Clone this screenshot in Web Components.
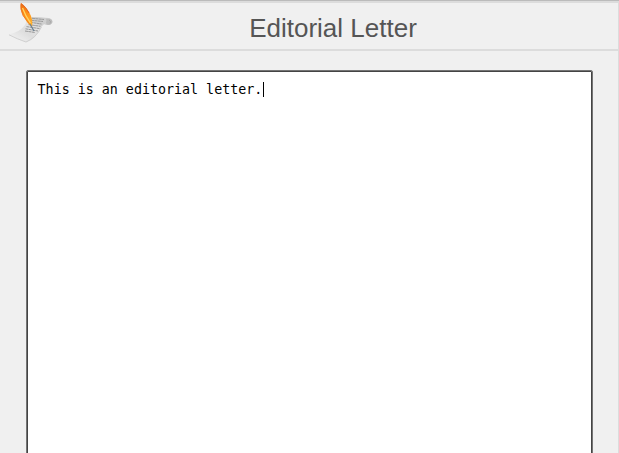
<!DOCTYPE html>
<html lang="en">
<head>
<meta charset="utf-8">
<title>Editorial Letter</title>
<style>
html, body { margin: 0; height: 100%; overflow: hidden; background: #f0f0f0; }
</style>
</head>
<body>
<letter-dialog>
  <dialog-header slot="header">Editorial Letter</dialog-header>
  <letter-editor>This is an editorial letter.</letter-editor>
</letter-dialog>
<script>
const define = (name, html) => customElements.define(name, class extends HTMLElement {
  constructor() {
    super();
    this.attachShadow({ mode: 'open' }).innerHTML = html;
  }
});

define('quill-icon', `
<style>:host { display: block; width: 46px; height: 44px; } svg { display: block; }</style>
<svg width="46" height="44" viewBox="0 3 46 44" aria-hidden="true">
  <defs>
    <linearGradient id="paper" x1="0" y1="1" x2="1" y2="0">
      <stop offset="0" stop-color="#f8f8f8"/><stop offset=".4" stop-color="#dedede"/><stop offset=".6" stop-color="#e2e2e2"/><stop offset="1" stop-color="#c4c4c4"/>
    </linearGradient>
    <linearGradient id="feather" x1="0" y1="0" x2="0.5" y2="1">
      <stop offset="0" stop-color="#ee6c14"/><stop offset=".5" stop-color="#ff8c14"/><stop offset="1" stop-color="#ffae2c"/>
    </linearGradient>
  </defs>
  <path d="M0 34.500 Q11 33 17 25 Q20 17 27 17 L42 18.500 Q36 21 33.500 27 Q28 39 18 42.500 Q8 39 0 34.500Z" fill="url(#paper)"/>
  <path d="M1 34.800 Q9 39 18 42 Q28 38 33.500 27" fill="none" stroke="#c9c9c9" stroke-width=".8"/>
  <path d="M24 17 L41 18 Q45 19 44.500 22.500 Q43 25.500 38 25 Q36 23 34 26 L21 21Z" fill="#cfcfcf"/>
  <path d="M38 18.800 Q44 18 44.300 21.800 Q43.500 25 40 25 Q37 23.500 38.500 21Z" fill="#bcbcbc"/>
  <path d="M41 20 Q43.500 21 42 23.500" fill="none" stroke="#a0a0a0" stroke-width=".7"/>
  <path d="M24 18.300 L36 19.500 M23 20.300 L35 21.500 M22 22.300 L33.500 24 M20.500 24.600 L32.500 26.300 M18.500 26.600 L31.500 28.600 M17.500 28.800 L30 31 M17 31 L27 32.500" fill="none" stroke="#9a9a9a" stroke-width="1" stroke-dasharray="3 .4"/>
  <path d="M13 3 Q17.500 6 21.500 13 Q25.300 19 24 27.500 Q18 22 15 15.500 Q11.500 8 13 3Z" fill="url(#feather)"/>
  <path d="M14.500 8 Q17 15 22.500 23" fill="none" stroke="#ffd564" stroke-width="1.300"/>
  <path d="M13 3.500 Q12 9 15 15.500 L22 24.500" fill="none" stroke="#ea761f" stroke-width=".8"/>
  <path d="M13.500 4 Q18 7 21 13" fill="none" stroke="#df6425" stroke-width="1"/>
  <path d="M22 24 L26 31" stroke="#6b8295" stroke-width="1.300"/>
</svg>`);

define('dialog-header', `
<style>
:host { display: grid; grid-template-columns: 46px 1fr; box-sizing: border-box; height: 48px; padding-left: 8px; border-bottom: 2px solid #dcdcdc; color: #555; font: 26px/30px "Liberation Sans", Arial, sans-serif; }
h1 { margin: 10px 6px 0 0; font: inherit; text-align: center; }
</style>
<quill-icon></quill-icon><h1><slot></slot></h1>`);

define('letter-editor', `
<style>
:host { display: block; box-sizing: border-box; height: 420px; margin: 19px 25px 0 26px; padding: 10px 9.600px; border: 1px solid #747474; border-radius: 2px; box-shadow: inset 0 0 0 1px #444; background: #fff; color: #000; font: 13.333px/16px "DejaVu Sans Mono", monospace; }
div { display: flex; padding: 1px; }
i { width: 1px; height: 15px; margin-left: .6px; background: #000; }
</style>
<div role="textbox"><span><slot></slot></span><i></i></div>`);

define('letter-dialog', `
<style>
:host { display: block; box-sizing: border-box; width: 619px; height: 453px; overflow: hidden; background: #f0f0f0; border-top: 1px solid #bbb; }
section { box-sizing: border-box; height: 100%; border-top: 2px solid #dcdcdc; border-right: 1px solid #dcdcdc; }
</style>
<section><slot name="header"></slot><slot></slot></section>`);
</script>
</body>
</html>
